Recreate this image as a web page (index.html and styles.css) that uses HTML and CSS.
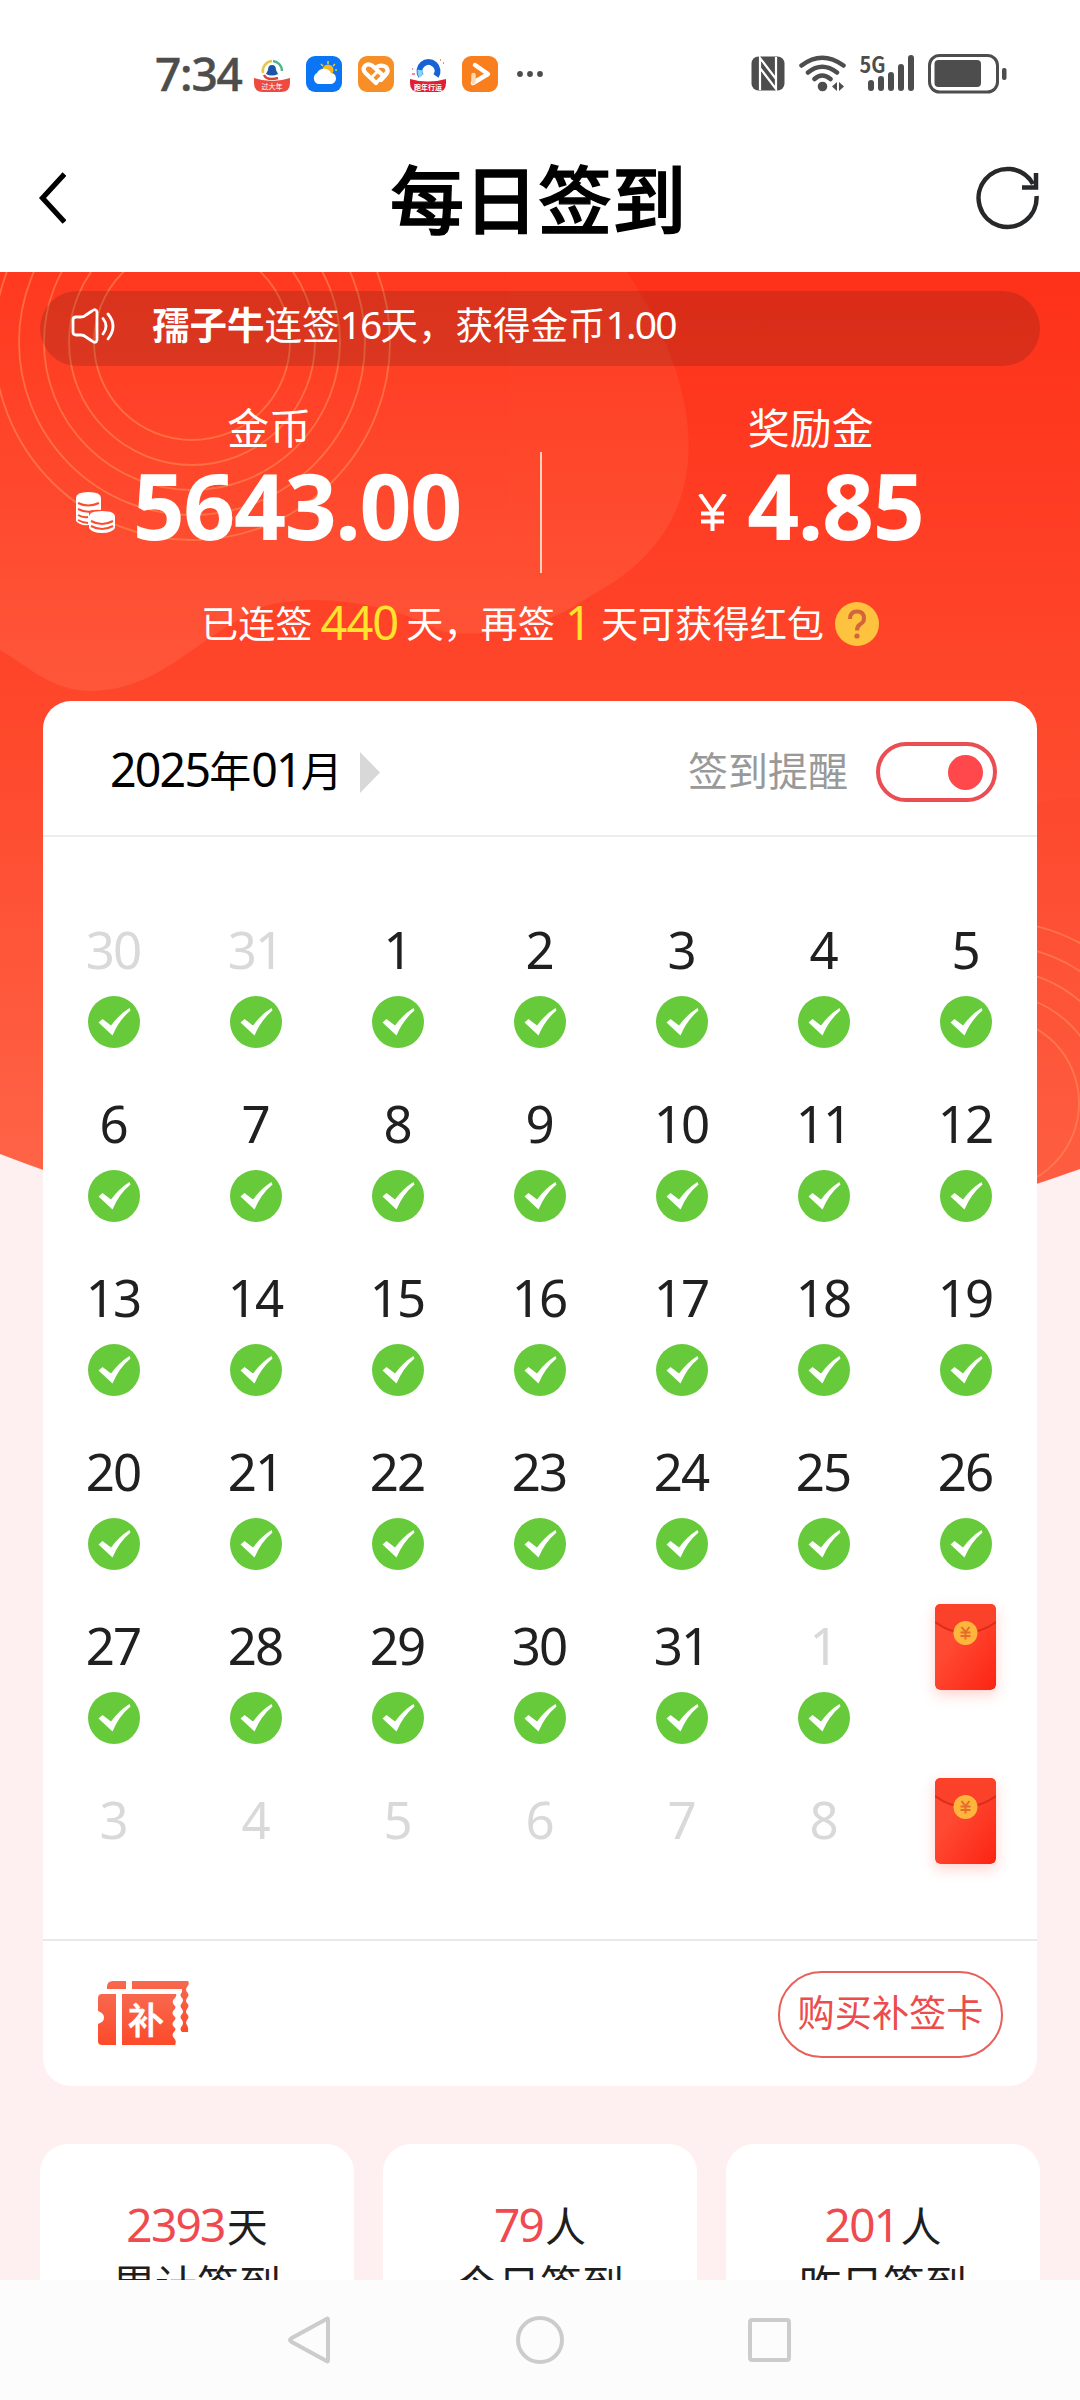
FILE: index.html
```html
<!DOCTYPE html>
<html lang="zh-CN">
<head>
<meta charset="utf-8">
<title>每日签到</title>
<link rel="stylesheet" href="styles.css">
</head>
<body>
<svg class="defs" width="0" height="0">
  <symbol id="tick" viewBox="0 0 52 52"><circle cx="26" cy="26" r="26" fill="#67ca3b"/><path d="M10.500 26.500 14.500 23 23 29.500Q31 18.500 41.500 12L42.500 14.500Q31 24 24.500 39.500Z" fill="#fff"/></symbol>
  <symbol id="packet" viewBox="0 0 61 86">
    <rect width="61" height="86" rx="5" fill="url(#packetFill)"/>
    <path d="M0 18Q30 40 61 18V5Q61 0 56 0H5Q0 0 0 5Z" fill="#fb4129"/>
    <path d="M0 18Q30 40 61 18" fill="none" stroke="#dc2c1c" stroke-width="2"/>
    <circle cx="30.500" cy="29" r="12" fill="#fdb53c"/>
    <path d="m26.500 23 4 5 4-5M30.500 28v7.500M25.500 28.500h10M25.500 32h10" fill="none" stroke="#e86a2c" stroke-width="2"/>
  </symbol>
  <linearGradient id="packetFill" x2="1" y2="1"><stop offset=".35" stop-color="#ff4a33"/><stop offset="1" stop-color="#fc2412"/></linearGradient>
  <linearGradient id="ticketFill" x2="0" y2="1"><stop stop-color="#f8684e"/><stop offset="1" stop-color="#fd4a2a"/></linearGradient>
</svg>

<div class="phone">
  <header class="status">
    <div class="status-left">
      <span class="clock">7:34</span>
      <svg class="app" viewBox="0 0 36 36"><path d="M9 17A10 10 0 0 1 18 5" fill="none" stroke="#e5c64c" stroke-width="2.500"/><path d="M19 5a10 10 0 0 1 9 10" fill="none" stroke="#4db58c" stroke-width="2.500"/><path d="M10 19q3 6 14 3" fill="none" stroke="#d8453f" stroke-width="2.500"/><path d="M18 9q4 0 4 5l2 4q-6 3-12 0l2-4q0-5 4-5" fill="#1a55a8"/><path d="M0 22q18 6 36 0v5q0 9-9 9H9q-9 0-9-9Z" fill="#ee4b40"/><text x="18" y="33" font-size="7" fill="#fff" text-anchor="middle">过大年</text></svg>
      <svg class="app" viewBox="0 0 36 36"><rect width="36" height="36" rx="9" fill="#0a76f5"/><path d="M22 5v3M15 8l2 2M29 8l-2 2M31 14h-2M29 20l-2-2" stroke="#ffc72c" stroke-width="1.500"/><circle cx="22" cy="14" r="5.500" fill="#ffb81c"/><path d="M12 28a6 6 0 0 1-1-11 8 8 0 0 1 14 0 5.500 5.500 0 0 1-1 11Z" fill="#fff"/></svg>
      <svg class="app" viewBox="0 0 36 36"><rect width="36" height="36" rx="9" fill="#f78f26"/><path d="M18 27 7.500 17Q4 13 7 10t7-.5L24 18.500M18 11.500q5-3.500 10-.5 3.500 4-.5 8L23 24" fill="none" stroke="#fff" stroke-width="4.200" stroke-linecap="round"/><path d="M18 27 28 17" stroke="#fff" stroke-width="3.500" stroke-linecap="round"/><path d="m14 21 6-6" stroke="#fff" stroke-width="3"/></svg>
      <svg class="app" viewBox="0 0 36 36"><path d="M11 20a9 9 0 1 1 15 0" fill="none" stroke="#1763d6" stroke-width="6"/><path d="M11 20a9 9 0 0 1-1-6" fill="none" stroke="#86d4f2" stroke-width="5"/><path d="M30 4h1M33 7h1M2 13h1M2 18h3" stroke="#e66" stroke-width="1.500"/><path d="M0 23q18 5 36 0v4q0 9-9 9H9q-9 0-9-9Z" fill="#e01f35"/><text x="18" y="33.500" font-size="7" font-weight="700" fill="#fff" text-anchor="middle">跑年行运</text></svg>
      <svg class="app" viewBox="0 0 36 36"><rect width="36" height="36" rx="9" fill="#f97e1e"/><path d="m13 9 13 9-15 9" fill="none" stroke="#fff" stroke-width="4.500" stroke-linejoin="round" stroke-linecap="round"/><path d="M11.500 19v7" stroke="#ffd9b5" stroke-width="4.500" stroke-linecap="round"/></svg>
      <svg class="more" viewBox="0 0 28 8" fill="#4d4d4d"><circle cx="4" cy="4" r="2.900"/><circle cx="14" cy="4" r="2.900"/><circle cx="24" cy="4" r="2.900"/></svg>
    </div>
    <svg class="status-right" viewBox="0 0 256 40" fill="#4d4d4d">
      <rect x=".5" y="2.500" width="33" height="34" rx="7"/>
      <path d="M9 36V4L25 25V12M25 3V35L9 14V27" fill="none" stroke="#fff" stroke-width="2.200"/>
      <g fill="none" stroke="#4d4d4d" stroke-width="4.500" stroke-linecap="round"><path d="M50.500 11.500Q71 -4 92.500 11.500M57 18.500Q71 7 86 18.500M63.500 25Q71 18 79.500 25"/></g>
      <circle cx="71.500" cy="32.500" r="4.800"/><path d="M86 28v9l-5-4.500ZM88 28v9l5-4.500Z"/>
      <text x="108.500" y="19" font-size="22" font-weight="700" textLength="26" lengthAdjust="spacingAndGlyphs">5G</text>
      <g stroke="#4d4d4d" stroke-width="6" stroke-linecap="round"><path d="M120 29v5M130 25v9M140 21v13M150 13v21M160 4v30"/></g>
      <rect x="178.500" y="1.500" width="68" height="36.500" rx="10" fill="none" stroke="#4d4d4d" stroke-width="3"/>
      <rect x="183.500" y="6" width="46.500" height="27" rx="4"/><rect x="251" y="14" width="4.500" height="12" rx="2"/>
    </svg>
  </header>

  <nav class="titlebar">
    <svg class="back" viewBox="0 0 28 52"><path d="M26.500 2 4.500 26l22 24" fill="none" stroke="#000" stroke-width="5.200"/></svg>
    <h1>每日签到</h1>
    <svg class="refresh" viewBox="0 0 64 64" fill="none" stroke="#26282a" stroke-width="4.500"><path d="M60.500 30A29 29 0 1 1 57 18"/><path d="M60 7v14.500H46"/></svg>
  </nav>

  <main>
    <svg class="backdrop" viewBox="0 0 1080 920">
      <defs>
        <linearGradient id="sky" x2="0" y2="1"><stop stop-color="#fe311a"/><stop offset=".5" stop-color="#fe4a2e"/><stop offset="1" stop-color="#ff694c"/></linearGradient>
        <linearGradient id="blob" x2="0" y2="1"><stop stop-color="#ff7a50" stop-opacity=".12"/><stop offset="1" stop-color="#ff8060" stop-opacity=".28"/></linearGradient>
        <clipPath id="heroShape"><path d="M0 0H1080V897Q540 1090 0 882Z"/></clipPath>
      </defs>
      <path d="M0 0H1080V897Q540 1090 0 882Z" fill="url(#sky)"/>
      <path d="M0 0H627C700 110 730 250 592 323C540 360 480 366 440 359C390 330 310 320 262 335C190 370 160 418 90 419C50 418 30 395 0 378Z" fill="url(#blob)"/>
      <path d="M1030 533Q1060 524 1080 526V897L1030 915Z" fill="#f22f1e" opacity=".1"/>
      <g clip-path="url(#heroShape)" fill="none" stroke="#ff8d55" stroke-width="1.800" opacity=".6"><circle cx="192" cy="70" r="98"/><circle cx="192" cy="70" r="123"/><circle cx="192" cy="70" r="148"/><circle cx="192" cy="70" r="173"/><circle cx="192" cy="70" r="198"/>
      <circle cx="993" cy="831" r="86"/><circle cx="993" cy="831" r="110"/><circle cx="993" cy="831" r="134"/><circle cx="993" cy="831" r="158"/><circle cx="993" cy="831" r="182"/></g>
    </svg>

    <div class="notice">
      <svg class="speaker" viewBox="0 0 45 36" fill="none" stroke="#fff" stroke-width="2.800" stroke-linecap="round" stroke-linejoin="round"><path d="M2 12q0-3 3-3h5q3 0 5-2l6-4q4-3 5 1v28q-1 4-5 1l-6-4q-2-2-5-2H5q-3 0-3-3Z"/><path d="M32 10.500q6 7.500 0 15.500M37 6q10 12 0 25"/></svg>
      <p><b>孺子牛</b>连签<span class="num">16</span>天，获得金币<span class="num">1.00</span></p>
    </div>

    <section class="balances">
      <div class="balance">
        <div class="label">金币</div>
        <div class="amount">
          <svg class="coins" viewBox="0 0 40 41"><path d="M1 6v23q4 5 13 4V20q4-3 12-2V6Q26 0 13.500 0T1 6Z" fill="#fff"/><path d="M3 11q10 5 21 0M3 17q8 4 15 2M3 23q5 3 10 2M3 28q5 3 10 3" fill="none" stroke="#fc4c2e" stroke-width="2"/><path d="M14 25v11q3 5 13 5t13-5V25q0-6-13-6t-13 6Z" fill="#fff"/><path d="M16 29q11 6 22 0M16 34q11 6 22 0" fill="none" stroke="#fc4c2e" stroke-width="2"/></svg>
          <strong>5643.00</strong>
        </div>
      </div>
      <div class="rule"></div>
      <div class="balance">
        <div class="label">奖励金</div>
        <div class="amount"><svg class="yen" viewBox="0 0 29 37" fill="none" stroke="#fff" stroke-width="4"><path d="m2 0 12.500 18L27 0M14.500 18v19M3 19.500h23M3 27.500h23"/></svg><strong>4.85</strong></div>
      </div>
    </section>

    <p class="streak">已连签<em class="days">440</em>天，再签<em class="one">1</em>天可获得红包<svg class="help" viewBox="0 0 44 44"><circle cx="22" cy="22" r="22" fill="#fdc23e"/><path d="M15 17q0-7.500 7-7.500t7 7q0 3.500-3.500 5.500T22 28.500" fill="none" stroke="#d5643a" stroke-width="4"/><circle cx="22" cy="34" r="2.600" fill="#d5643a"/></svg></p>

    <section class="card">
      <div class="card-head">
        <div class="month"><span class="num">2025</span>年<span class="num">01</span>月</div>
        <svg class="next" viewBox="0 0 20 41"><path d="M0 0 20 20.500 0 41Z" fill="#d8d8d8"/></svg>
        <span class="remind">签到提醒</span>
        <span class="toggle"><i></i></span>
      </div>
      <div class="days-grid">
        <div class="day dim"><span>30</span><svg><use href="#tick"/></svg></div>
        <div class="day dim"><span>31</span><svg><use href="#tick"/></svg></div>
        <div class="day"><span>1</span><svg><use href="#tick"/></svg></div>
        <div class="day"><span>2</span><svg><use href="#tick"/></svg></div>
        <div class="day"><span>3</span><svg><use href="#tick"/></svg></div>
        <div class="day"><span>4</span><svg><use href="#tick"/></svg></div>
        <div class="day"><span>5</span><svg><use href="#tick"/></svg></div>
        <div class="day"><span>6</span><svg><use href="#tick"/></svg></div>
        <div class="day"><span>7</span><svg><use href="#tick"/></svg></div>
        <div class="day"><span>8</span><svg><use href="#tick"/></svg></div>
        <div class="day"><span>9</span><svg><use href="#tick"/></svg></div>
        <div class="day"><span>10</span><svg><use href="#tick"/></svg></div>
        <div class="day"><span>11</span><svg><use href="#tick"/></svg></div>
        <div class="day"><span>12</span><svg><use href="#tick"/></svg></div>
        <div class="day"><span>13</span><svg><use href="#tick"/></svg></div>
        <div class="day"><span>14</span><svg><use href="#tick"/></svg></div>
        <div class="day"><span>15</span><svg><use href="#tick"/></svg></div>
        <div class="day"><span>16</span><svg><use href="#tick"/></svg></div>
        <div class="day"><span>17</span><svg><use href="#tick"/></svg></div>
        <div class="day"><span>18</span><svg><use href="#tick"/></svg></div>
        <div class="day"><span>19</span><svg><use href="#tick"/></svg></div>
        <div class="day"><span>20</span><svg><use href="#tick"/></svg></div>
        <div class="day"><span>21</span><svg><use href="#tick"/></svg></div>
        <div class="day"><span>22</span><svg><use href="#tick"/></svg></div>
        <div class="day"><span>23</span><svg><use href="#tick"/></svg></div>
        <div class="day"><span>24</span><svg><use href="#tick"/></svg></div>
        <div class="day"><span>25</span><svg><use href="#tick"/></svg></div>
        <div class="day"><span>26</span><svg><use href="#tick"/></svg></div>
        <div class="day"><span>27</span><svg><use href="#tick"/></svg></div>
        <div class="day"><span>28</span><svg><use href="#tick"/></svg></div>
        <div class="day"><span>29</span><svg><use href="#tick"/></svg></div>
        <div class="day"><span>30</span><svg><use href="#tick"/></svg></div>
        <div class="day"><span>31</span><svg><use href="#tick"/></svg></div>
        <div class="day dim"><span>1</span><svg><use href="#tick"/></svg></div>
        <div class="day gift"><svg><use href="#packet"/></svg></div>
        <div class="day dim"><span>3</span></div>
        <div class="day dim"><span>4</span></div>
        <div class="day dim"><span>5</span></div>
        <div class="day dim"><span>6</span></div>
        <div class="day dim"><span>7</span></div>
        <div class="day dim"><span>8</span></div>
        <div class="day gift"><svg><use href="#packet"/></svg></div>
      </div>
      <div class="card-foot">
        <svg class="ticket" viewBox="0 0 92 64">
          <path d="M9 8V6Q9 0 15 0H28V8ZM34 0H90q2 2-1 6-2 3 0 5 3 3 0 6-2 3 0 5 3 3 0 6-2 3 0 5 3 3 0 6-2 3 0 5 2 3 1 7H84q-3-3 0-6 2-3 0-6-3-3 0-6 2-2 0-5-3-3 0-6 2-3 0-5-3-3 0-6V8H34Z" fill="url(#ticketFill)"/>
          <path d="M0 17q0-4 4-4H18V64H4Q0 64 0 60V43q6-2 6-6.500T0 30ZM24 13H78q1 2-1 4-4 3-1 7 3 2 0 5t0 6q3 2 0 5t0 6q3 2 0 5t0 6q3 3 1 7H24Z" fill="url(#ticketFill)"/>
          <text x="48" y="53" font-size="36" font-weight="500" fill="#fff" stroke="#fff" stroke-width=".6" text-anchor="middle">补</text>
        </svg>
        <button class="buy">购买补签卡</button>
      </div>
    </section>

    <section class="stats">
      <div class="stat"><p><b class="num">2393</b>天</p><p class="caption">累计签到</p></div>
      <div class="stat"><p><b class="num">79</b>人</p><p class="caption">今日签到</p></div>
      <div class="stat"><p><b class="num">201</b>人</p><p class="caption">昨日签到</p></div>
    </section>
  </main>

  <footer class="navbar">
    <svg viewBox="0 0 48 48"><path d="M42 3.500V44.500Q42 46 40.500 45L5 25.500Q3 24 5 22.500L40.500 3Q42 2 42 3.500Z"/></svg>
    <svg viewBox="0 0 48 48"><circle cx="24" cy="24" r="22"/></svg>
    <svg viewBox="0 0 48 48"><rect x="4" y="4" width="39" height="40" rx="2"/></svg>
  </footer>
</div>
</body>
</html>
```
FILE: styles.css
```css
* { box-sizing: border-box; margin: 0; padding: 0; }
body { width: 1080px; height: 2400px; overflow: hidden; background: #feeff0; font-family: "Noto Sans CJK SC", sans-serif; color: #1e1e1e; }
svg { display: block; flex: none; }
.defs { position: absolute; }
.phone { width: 1080px; height: 2400px; display: grid; grid-template-rows: 130px 142px 2008px 120px; }
.num, .days, .one, .day span, .amount strong, .clock { font-family: "Noto Sans", sans-serif; }

.status { background: #fff; display: flex; justify-content: space-between; padding: 54px 73px 0 155px; height: 130px; }
.status-left { display: flex; align-items: center; height: 40px; gap: 16px; }
.clock { width: 83px; font-size: 46px; line-height: 40px; padding-bottom: 3px; color: #4d4d4d; font-weight: 500; letter-spacing: -1.2px; white-space: nowrap; -webkit-text-stroke: .5px #4d4d4d; }
.app { width: 36px; height: 36px; }
.more { width: 28px; height: 8px; margin-left: 2px; }
.status-right { width: 256px; height: 40px; }

.titlebar { background: #fff; display: flex; justify-content: space-between; align-items: center; padding: 0 40px 6px 38px; }
.titlebar h1 { font-size: 74px; line-height: 100px; font-weight: 500; color: #000; padding: 0 0 4px 34px; -webkit-text-stroke: 1.4px #000; }
.back { width: 28px; height: 52px; }
.refresh { width: 64px; height: 64px; }

main { position: relative; overflow: hidden; padding: 19px 40px 0; z-index: 0; }
.backdrop { position: absolute; left: 0; top: 0; width: 1080px; height: 920px; z-index: -1; }
.notice { height: 75px; border-radius: 38px; background: rgba(40, 20, 10, .17); display: flex; align-items: center; padding: 0 0 5px 31px; color: #fff; font-size: 37.5px; gap: 36px; }
.notice p { line-height: 60px; padding-bottom: 5px; white-space: nowrap; }
.notice .num { font-size: 39px; letter-spacing: -1.8px; }
.speaker { width: 45px; height: 36px; }

.balances { display: flex; margin: 35px -40px 0; color: #fff; height: 177px; }
.balance { width: 539px; display: flex; flex-direction: column; align-items: center; }
.label { font-size: 42px; line-height: 50px; }
.amount { display: flex; align-items: center; height: 100px; margin-top: 4px; }
.amount strong { font-size: 91px; line-height: 100px; letter-spacing: -1.4px; }
.coins { width: 40px; height: 41px; margin: 14px 18px 0 -3px; }
.yen { width: 29px; height: 37px; margin: 14px 20px 0 0; }
.rule { width: 2px; height: 121px; margin: 51px 0 0 1px; background: rgba(255, 235, 215, .85); }

.streak { display: flex; align-items: center; justify-content: center; height: 60px; margin-top: 14px; color: #fff; font-size: 37.2px; white-space: nowrap; }
.streak em { font-style: normal; font-size: 47px; line-height: 60px; color: #ffe32c; letter-spacing: -1px; }
.days { margin: 0 8px; }
.one { margin: 0 10px; }
.help { width: 44px; height: 44px; margin: 3px 0 0 11px; }

.card { width: 994px; height: 1385px; margin: 49px 0 0 3px; background: #fff; border-radius: 28px; display: flex; flex-direction: column; }
.card-head { height: 136px; border-bottom: 2px solid #ededed; display: flex; align-items: center; padding: 8px 40px 0 67px; }
.month { font-size: 42px; line-height: 60px; color: #000; padding-bottom: 7px; }
.month .num { font-size: 46.5px; letter-spacing: -1.8px; }
.next { width: 20px; height: 41px; margin-left: 17px; }
.remind { margin-left: auto; font-size: 40px; line-height: 60px; color: #999; padding-bottom: 6px; }
.toggle { width: 121px; height: 60px; margin-left: 28px; border: 4px solid #ea4e52; border-radius: 30px; display: flex; align-items: center; justify-content: flex-end; padding-right: 10px; }
.toggle i { width: 35px; height: 35px; border-radius: 50%; background: #ff484b; }

.days-grid { display: grid; grid-template-columns: repeat(7, 142px); grid-auto-rows: 174px; margin-top: 27px; height: 1075px; }
.day { display: flex; flex-direction: column; align-items: center; padding-top: 55px; }
.day span { font-size: 51px; line-height: 60px; letter-spacing: -2px; margin-left: -2px; color: #202020; }
.day svg { width: 52px; height: 52px; margin-top: 17px; }
.dim span { color: #d9d9d9; }
.gift { padding-top: 44px; }
.gift svg { width: 61px; height: 86px; margin: 0 0 0 -1px; border-radius: 5px; box-shadow: 0 5px 14px rgba(255, 80, 60, .25); }

.card-foot { flex: 1; border-top: 2px solid #e9e9e9; display: flex; justify-content: space-between; align-items: center; padding: 2px 34px 0 55px; }
.ticket { width: 92px; height: 64px; margin-bottom: 4px; }
.buy { width: 225px; height: 87px; border: 2px solid #e8605a; border-radius: 44px; background: none; color: #ec4c4c; font: 37.2px/60px "Noto Sans CJK SC", sans-serif; padding-bottom: 7px; white-space: nowrap; }

.stats { display: flex; gap: 29px; margin-top: 58px; }
.stat { width: 314px; height: 220px; flex: none; background: #fff; border-radius: 28px; text-align: center; padding-top: 50px; font-size: 41px; line-height: 60px; }
.stat .num { font-weight: 400; font-size: 46px; line-height: 60px; letter-spacing: -1.7px; color: #ef4a50; margin-right: 2px; }
.stat .caption { font-size: 42px; line-height: 50px; padding-top: 4px; }

.navbar { background: #fcfcfc; position: relative; display: flex; justify-content: center; gap: 182px; padding-top: 36px; }
.navbar svg { width: 48px; height: 48px; fill: none; stroke: #ccc; stroke-width: 4; }
```
